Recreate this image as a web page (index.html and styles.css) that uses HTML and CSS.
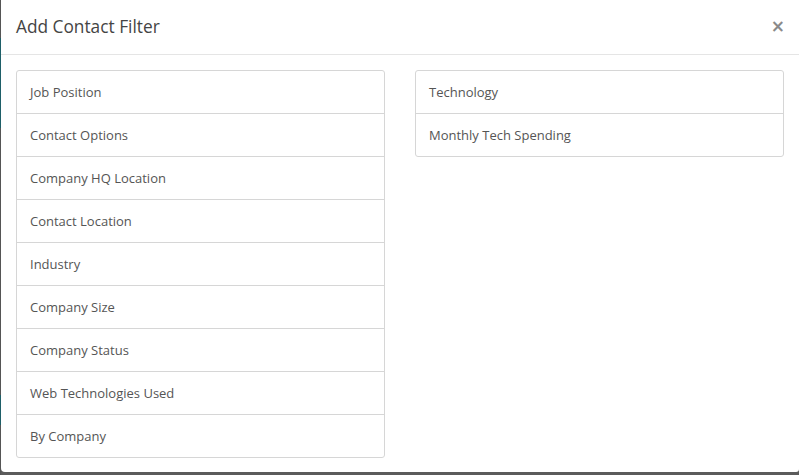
FILE: index.html
```html
<!DOCTYPE html>
<html>
<head>
<meta charset="utf-8">
<link rel="stylesheet" href="styles.css">
</head>
<body>
<div class="backdrop">
  <div class="edge">
    <span class="seg teal s1"></span>
    <span class="seg gray s2"></span>
    <span class="seg teal s3"></span>
    <span class="seg gray s4"></span>
  </div>
  <div class="modal">
    <div class="modal-header">
      <h4 class="modal-title">Add Contact Filter</h4>
      <button class="close" type="button">×</button>
    </div>
    <div class="modal-body">
      <div class="row">
        <div class="col">
          <ul class="list-group">
            <li class="list-group-item">Job Position</li>
            <li class="list-group-item">Contact Options</li>
            <li class="list-group-item">Company HQ Location</li>
            <li class="list-group-item">Contact Location</li>
            <li class="list-group-item">Industry</li>
            <li class="list-group-item">Company Size</li>
            <li class="list-group-item">Company Status</li>
            <li class="list-group-item">Web Technologies Used</li>
            <li class="list-group-item">By Company</li>
          </ul>
        </div>
        <div class="col">
          <ul class="list-group">
            <li class="list-group-item">Technology</li>
            <li class="list-group-item">Monthly Tech Spending</li>
          </ul>
        </div>
      </div>
    </div>
  </div>
</div>
</body>
</html>
```

FILE: styles.css
```css
* { box-sizing: border-box; }
html, body {
  margin: 0;
  padding: 0;
  width: 799px;
  height: 475px;
  overflow: hidden;
  background: #5b5b5b;
  font-family: "Open Sans", "DejaVu Sans", sans-serif;
}
.backdrop {
  display: flex;
  width: 799px;
  height: 475px;
  align-items: flex-start;
}
.edge {
  width: 1px;
  height: 475px;
  display: flex;
  flex-direction: column;
  background: #555;
}
.seg { display: block; width: 1px; }
.s1 { height: 90px; margin-top: 38px; }
.s2 { height: 267px; }
.s3 { height: 30px; }
.teal { background: #1e5f68; }
.gray { background: #555; }
.modal {
  width: 798px;
  height: 472px;
  background: #fff;
  border-radius: 0 0 3px 4px;
  display: flex;
  flex-direction: column;
}
.modal-header {
  height: 55px;
  border-bottom: 1px solid #e5e5e5;
  display: flex;
  align-items: center;
  justify-content: space-between;
  padding: 0 14px 0 15px;
}
.modal-title {
  margin: 0;
  font-size: 17.3px;
  font-weight: 400;
  color: #444;
  line-height: 1;
  padding-bottom: 1px;
}
.close {
  border: 0;
  background: transparent;
  padding: 0;
  margin: 0;
  font-family: "DejaVu Sans", sans-serif;
  font-size: 17px;
  font-weight: 700;
  color: #8a8a8a;
  line-height: 1;
  cursor: pointer;
  padding-bottom: 2px;
}
.modal-body {
  padding: 15px 0 0 0;
}
.row {
  display: flex;
}
.col {
  width: 399px;
  padding: 0 15px;
}
.list-group {
  list-style: none;
  margin: 0;
  padding: 0;
  border: 1px solid #d6d6d6;
  border-radius: 3px;
}
.list-group-item {
  height: 43px;
  display: flex;
  align-items: center;
  padding: 0 13px;
  border-top: 1px solid #d6d6d6;
  font-size: 13px;
  color: #555;
}
.list-group-item:first-child {
  border-top: 0;
  height: 42px;
}
```
